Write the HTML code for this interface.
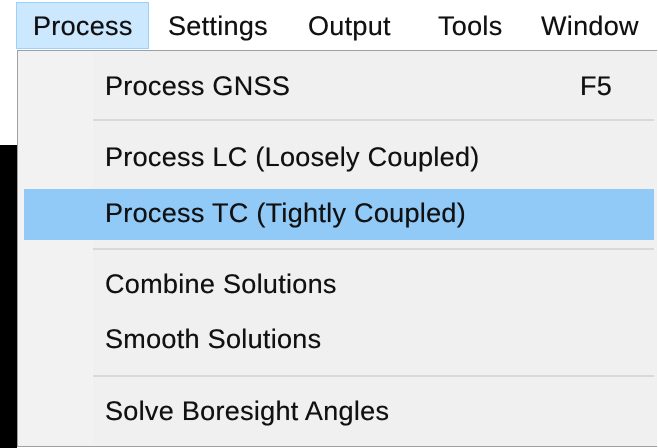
<!DOCTYPE html>
<html><head><style>
body{margin:0;width:658px;height:448px;overflow:hidden;background:#fff;font-family:"Liberation Sans",sans-serif;color:#111;position:relative}
.a{position:absolute}
.t{position:absolute;font-size:27px;line-height:30px;white-space:nowrap;letter-spacing:0.3px;text-shadow:0 0 0.4px #000}
.sep{position:absolute;left:93px;right:4px;height:2px;background:#d9d9d9}
</style></head><body>
<div class="a" style="left:0;top:145px;width:17px;height:303px;background:#000"></div>
<div class="a" style="left:16px;top:2px;width:131px;height:45px;background:#cce8ff;border:1px solid #99d1ff"></div>
<div class="t" style="left:33px;top:11px">Process</div>
<div class="t" style="left:168px;top:11px">Settings</div>
<div class="t" style="left:308px;top:11px">Output</div>
<div class="t" style="left:438px;top:11px">Tools</div>
<div class="t" style="left:541px;top:11px">Window</div>
<div class="a" style="left:17px;top:50px;width:639px;height:395px;background:#f0f0f0;border:1px solid #a0a0a0;border-right:none"></div>
<div class="a" style="left:18px;top:51px;width:75px;height:394px;background:#f2f2f2"></div>
<div class="a" style="left:24px;top:189px;width:630px;height:51px;background:#91c9f7"></div>
<div class="t" style="left:105px;top:71px">Process GNSS</div>
<div class="t" style="left:580px;top:71px">F5</div>
<div class="sep" style="top:119px"></div>
<div class="t" style="left:105px;top:142px">Process LC (Loosely Coupled)</div>
<div class="t" style="left:105px;top:198px">Process TC (Tightly Coupled)</div>
<div class="sep" style="top:248px"></div>
<div class="t" style="left:105px;top:269px">Combine Solutions</div>
<div class="t" style="left:105px;top:324px">Smooth Solutions</div>
<div class="sep" style="top:375px"></div>
<div class="t" style="left:105px;top:396px">Solve Boresight Angles</div>
</body></html>
